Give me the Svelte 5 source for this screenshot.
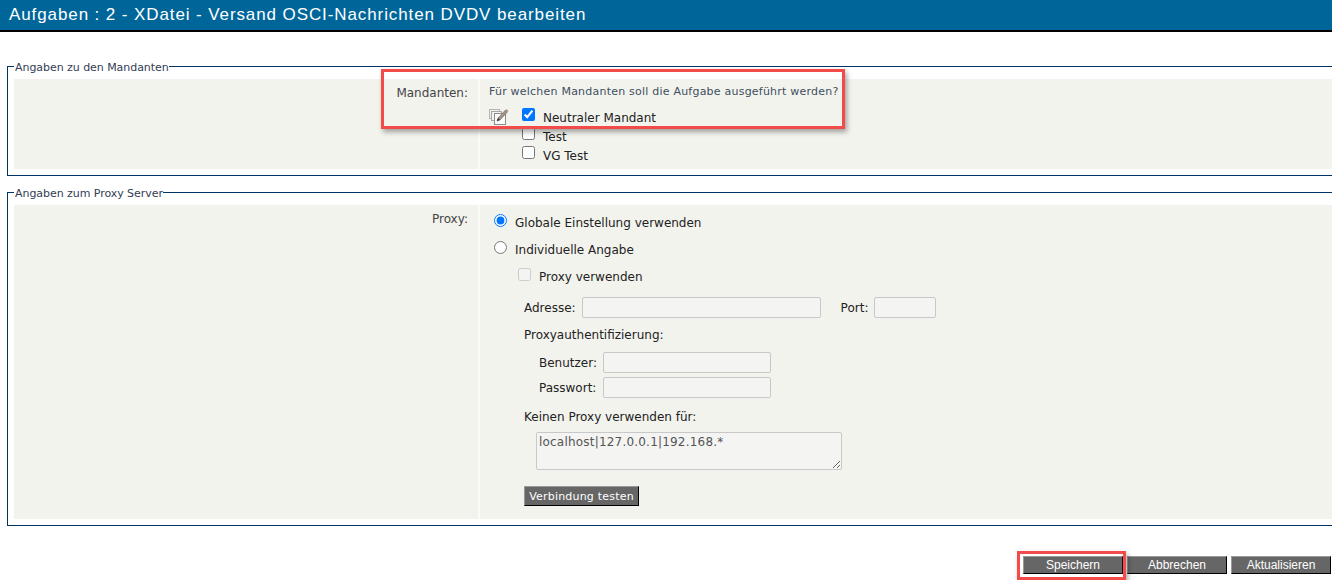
<script>
  const mandanten = [
    { name: 'Neutraler Mandant', checked: true },
    { name: 'Test', checked: false },
    { name: 'VG Test', checked: false }
  ];
</script>

<div class="page">
  <header class="title">Aufgaben : 2 - XDatei - Versand OSCI-Nachrichten DVDV bearbeiten</header>

  <fieldset class="group first">
    <legend>Angaben zu den Mandanten</legend>
    <div class="row mandanten">
      <div class="label">Mandanten:</div>
      <div class="content">
        <div class="hint">Für welchen Mandanten soll die Aufgabe ausgeführt werden?</div>
        <div class="picker">
          <svg class="multi" width="20" height="17" viewBox="0 0 20 17" aria-hidden="true">
            <rect x="0.5" y="1.5" width="10" height="9" fill="#f0f0f0" stroke="#b4b4b4"/>
            <rect x="2.5" y="3.5" width="10" height="9" fill="#f2f2f2" stroke="#a8a8a8"/>
            <rect x="5.5" y="5.5" width="11" height="11" fill="#fbfbfb" stroke="#8c8c8c"/>
            <path d="M8 13 L9 10 L16.5 2 L18.5 4 L11 12 Z" fill="#a09488" stroke="#5f564e" stroke-width="0.5"/>
            <path d="M16.5 2 L17.5 1 L19.5 3 L18.5 4 Z" fill="#b58f86"/>
            <path d="M8 13 L9 10 L11 12 Z" fill="#333"/>
          </svg>
          <div class="list">
            {#each mandanten as m}
              <label class="check"><input type="checkbox" checked={m.checked} /><span>{m.name}</span></label>
            {/each}
          </div>
        </div>
      </div>
    </div>
  </fieldset>

  <fieldset class="group second">
    <legend>Angaben zum Proxy Server</legend>
    <div class="row proxy">
      <div class="label">Proxy:</div>
      <div class="content">
        <label class="radio"><input type="radio" name="p" checked /><span>Globale Einstellung verwenden</span></label>
        <label class="radio two"><input type="radio" name="p" /><span>Individuelle Angabe</span></label>
        <label class="use"><input type="checkbox" disabled /><span>Proxy verwenden</span></label>
        <div class="addr">
          <span>Adresse:</span><input class="f a" disabled />
          <span class="port">Port:</span><input class="f b" disabled />
        </div>
        <div class="auth">Proxyauthentifizierung:</div>
        <div class="cred"><span>Benutzer:</span><input class="f c" disabled /></div>
        <div class="cred pw"><span>Passwort:</span><input class="f c" disabled /></div>
        <div class="none">Keinen Proxy verwenden für:</div>
        <textarea disabled>localhost|127.0.0.1|192.168.*</textarea>
        <button class="test">Verbindung testen</button>
      </div>
    </div>
  </fieldset>

  <div class="actions">
    <button>Speichern</button>
    <button>Abbrechen</button>
    <button>Aktualisieren</button>
  </div>

  <div class="mark m1"></div>
  <div class="mark m2"></div>
</div>

<style>
  :global(body) { margin: 0; overflow: hidden; background: #fff; }
  .page {
    position: relative;
    width: 1332px;
    height: 580px;
    overflow: hidden;
    font: 12px "DejaVu Sans", Verdana, sans-serif;
    color: #444;
  }
  .title {
    height: 30px;
    background: #006699;
    border-bottom: 2px solid #000;
    color: #fff;
    font: 17px/29px "Liberation Sans", Arial, sans-serif;
    letter-spacing: 0.9px;
    padding-left: 9px;
  }
  .group {
    margin: 0 -40px 0 7px;
    padding: 5px 0 6px 6px;
    border: 1px solid #003366;
    min-width: 0;
    box-sizing: border-box;
  }
  .first { margin-top: 27px; height: 117px; }
  .second { margin-top: 9px; height: 341px; }
  legend {
    padding: 2px 0 0 1px;
    font-size: 11px;
    line-height: 13px;
    letter-spacing: -0.05px;
    color: #333d55;
  }
  .row {
    display: grid;
    grid-template-columns: 464px 1fr;
    background: #f3f3ee;
  }
  .label {
    text-align: right;
    padding: 7px 10px 0 0;
    line-height: 15px;
    border-right: 2px solid #fafaf8;
    box-sizing: border-box;
    width: 466px;
  }
  .mandanten { height: 90px; }
  .mandanten .content { padding: 6px 0 0 11px; }
  .hint { font-size: 11px; line-height: 14px; letter-spacing: 0.22px; color: #3d4f5f; margin-bottom: 5px; }
  .picker { display: flex; }
  .multi { margin-top: 4px; flex: none; }
  .list { margin-left: 13px; display: flex; flex-direction: column; padding-top: 2px; }
  .check { display: flex; align-items: center; height: 19px; color: #222; }
  .check input { margin: 0 8px 3px 0; width: 13px; height: 13px; }
  .check span { padding-top: 4px; }
  .proxy { height: 314px; }
  .proxy .content { padding: 0 0 0 16px; color: #222; }
  .radio { display: flex; align-items: center; height: 17px; margin-top: 9px; }
  .radio.two { margin-top: 10px; }
  .radio input { margin: 0 8px 4px 0; width: 13px; height: 13px; }
  .use { display: flex; align-items: center; height: 17px; margin: 10px 0 0 24px; }
  .use input { margin: 0 8px 4px 0; width: 13px; height: 13px; }
  .addr { display: flex; align-items: center; margin: 12px 0 0 30px; height: 21px; }
  .f {
    box-sizing: border-box;
    height: 21px;
    margin: 0;
    padding: 0;
    border: 1px solid #c8c8c8;
    border-radius: 2px;
    background: #f4f4f2;
  }
  .a { width: 239px; margin-left: 6px; }
  .port { margin-left: 20px; }
  .b { width: 62px; margin-left: 6px; }
  .auth { margin: 10px 0 0 30px; line-height: 15px; }
  .cred { display: flex; align-items: center; margin: 9px 0 0 45px; height: 21px; }
  .cred.pw { margin-top: 4px; }
  .cred span { width: 64px; }
  .c { width: 168px; }
  .none { margin: 12px 0 0 30px; line-height: 15px; }
  textarea {
    display: block;
    box-sizing: border-box;
    width: 306px;
    height: 38px;
    margin: 7px 0 0 42px;
    padding: 2px;
    border: 1px solid #c8c8c8;
    border-radius: 2px;
    background: #f4f4f2;
    color: #555;
    font: 12px "DejaVu Sans", Verdana, sans-serif;
    letter-spacing: 0.2px;
  }
  button {
    font-family: "DejaVu Sans", Verdana, sans-serif;
    background: #666;
    color: #fff;
    border: 1px solid;
    border-color: #999 #000 #000 #999;
    padding: 0;
    margin: 0;
  }
  .test {
    display: block;
    width: 115px;
    height: 20px;
    margin: 16px 0 0 30px;
    font-size: 11px;
    letter-spacing: 0.2px;
  }
  .actions {
    display: flex;
    justify-content: flex-end;
    gap: 4px;
    margin: 30px 1px 0 0;
  }
  .actions button {
    width: 100px;
    height: 18px;
    font-family: "Liberation Sans", Arial, sans-serif;
    font-size: 12px;
    font-weight: 400;
  }
  .mark {
    position: absolute;
    box-sizing: border-box;
    border: 3px solid #f34a4a;
    box-shadow: 2px 3px 5px rgba(0, 0, 0, 0.35);
  }
  .m1 { left: 381px; top: 69px; width: 464px; height: 60px; }
  .m2 { left: 1017px; top: 551px; width: 109px; height: 29px; }
</style>
